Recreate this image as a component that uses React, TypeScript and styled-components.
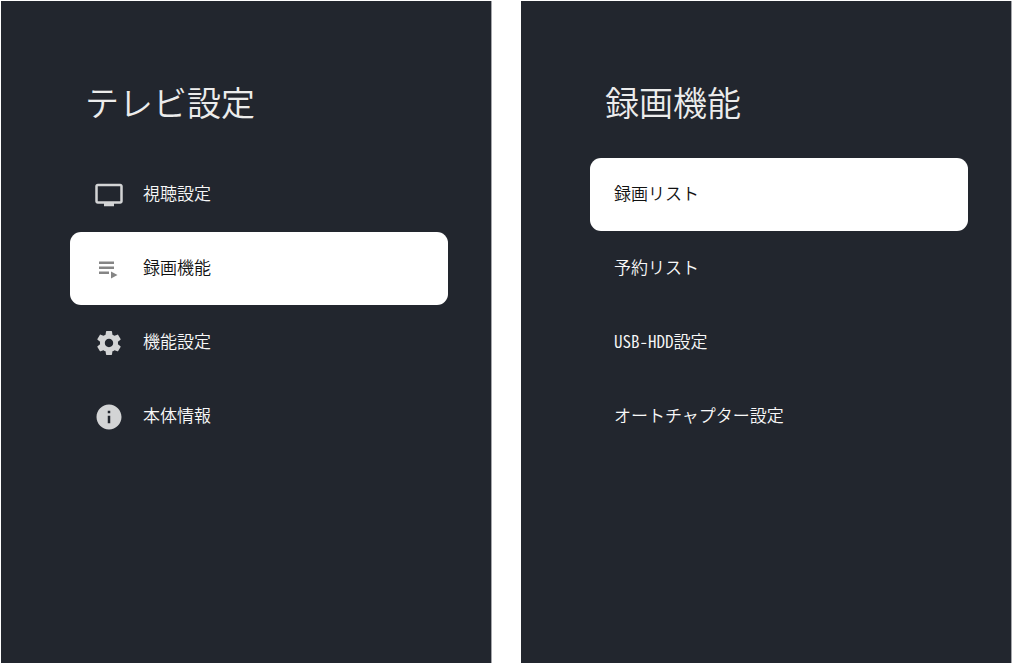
import React from "react";
import styled, { createGlobalStyle } from "styled-components";

const GlobalStyle = createGlobalStyle`
  *, *::before, *::after { box-sizing: border-box; }
  body {
    margin: 0;
    background: #ffffff;
    font-family: "Noto Sans CJK JP", "Noto Sans", sans-serif;
    font-feature-settings: "hwid";
  }
`;

const Page = styled.main`
  display: grid;
  grid-template-columns: 1fr 1fr;
  gap: 30px;
  min-height: 100vh;
  padding: 1px;
`;

const Panel = styled.section`
  padding: 76px 43px 40px 69px;
  background: #22262e;
  box-shadow: 1px 0 0 #a5a6aa;
`;

const Title = styled.h1`
  margin: 0 0 31px;
  padding-left: 15px;
  font-size: 34px;
  line-height: 50px;
  font-weight: 350;
  color: #ececec;
`;

const Menu = styled.ul`
  display: flex;
  flex-direction: column;
  gap: 1px;
  margin: 0;
  padding: 0;
  list-style: none;
`;

const MenuButton = styled.button<{ $selected?: boolean }>`
  display: flex;
  align-items: center;
  gap: 19px;
  width: 100%;
  height: 73px;
  padding: 0 24px;
  border: 0;
  border-radius: 11px;
  background: ${(p) => (p.$selected ? "#ffffff" : "transparent")};
  color: ${(p) => (p.$selected ? "#111111" : "#f8f8f8")};
  font: inherit;
  font-size: 17px;
  font-weight: 350;
  line-height: 24px;
  text-align: left;
  cursor: pointer;
`;

const Label = styled.span`
  padding-bottom: 3px;
`;

const Icon = styled.svg<{ $muted?: boolean }>`
  flex: none;
  width: 30px;
  height: 30px;
  fill: ${(p) => (p.$muted ? "#858585" : "#d3d4d5")};
`;

const TvIcon = () => (
  <Icon viewBox="0 0 24 24" aria-hidden="true">
    <path d="M21 3H3c-1.1 0-2 .9-2 2v12c0 1.1.9 2 2 2h5v2h8v-2h5c1.1 0 2-.9 2-2V5c0-1.1-.9-2-2-2zm0 14H3V5h18v12z" />
  </Icon>
);

const PlaylistIcon = () => (
  <Icon viewBox="0 0 30 30" $muted aria-hidden="true">
    <path d="M5 7.5h15v2.5H5zM5 12.5h15v2.500H5zM5 17.5h10v2.5H5zM17 17.5l6.5 3.5-6.5 3.5z" />
  </Icon>
);

const GearIcon = () => (
  <Icon viewBox="-.5 -.5 25 25" aria-hidden="true">
    <path d="M19.43 12.98c.04-.32.07-.64.07-.98s-.03-.66-.07-.98l2.11-1.65c.19-.15.24-.42.12-.64l-2-3.46c-.12-.22-.39-.3-.61-.22l-2.49 1c-.52-.4-1.08-.73-1.69-.98l-.38-2.65C14.46 2.18 14.25 2 14 2h-4c-.25 0-.46.18-.49.42l-.38 2.65c-.61.25-1.17.59-1.69.98l-2.49-1c-.23-.09-.49 0-.61.22l-2 3.46c-.13.22-.07.49.12.64l2.11 1.65c-.04.32-.07.65-.07.98s.03.66.07.98l-2.11 1.65c-.19.15-.24.42-.12.64l2 3.46c.12.22.39.3.61.22l2.49-1c.52.4 1.08.73 1.69.98l.38 2.65c.03.24.24.42.49.42h4c.25 0 .46-.18.49-.42l.38-2.65c.61-.25 1.17-.59 1.69-.98l2.49 1c.23.09.49 0 .61-.22l2-3.46c.12-.22.07-.49-.12-.64l-2.11-1.65zM12 15.5c-1.93 0-3.5-1.57-3.5-3.5s1.57-3.5 3.5-3.5 3.5 1.57 3.5 3.5-1.57 3.5-3.5 3.5z" />
  </Icon>
);

const InfoIcon = () => (
  <Icon viewBox="0 0 24 24" aria-hidden="true">
    <path d="M12 2C6.48 2 2 6.48 2 12s4.48 10 10 10 10-4.48 10-10S17.52 2 12 2zm1 15h-2v-6h2v6zm0-8h-2V7h2v2z" />
  </Icon>
);

type Item = { label: string; icon?: React.ReactNode; selected?: boolean };

const tvItems: Item[] = [
  { label: "視聴設定", icon: <TvIcon /> },
  { label: "録画機能", icon: <PlaylistIcon />, selected: true },
  { label: "機能設定", icon: <GearIcon /> },
  { label: "本体情報", icon: <InfoIcon /> },
];

const recordingItems: Item[] = [
  { label: "録画リスト", selected: true },
  { label: "予約リスト" },
  { label: "USB-HDD設定" },
  { label: "オートチャプター設定" },
];

const SettingsPanel = ({ title, items }: { title: string; items: Item[] }) => (
  <Panel>
    <Title>{title}</Title>
    <Menu>
      {items.map((item) => (
        <li key={item.label}>
          <MenuButton type="button" $selected={item.selected}>
            {item.icon}
            <Label>{item.label}</Label>
          </MenuButton>
        </li>
      ))}
    </Menu>
  </Panel>
);

export default function App() {
  return (
    <>
      <GlobalStyle />
      <Page>
        <SettingsPanel title="テレビ設定" items={tvItems} />
        <SettingsPanel title="録画機能" items={recordingItems} />
      </Page>
    </>
  );
}
